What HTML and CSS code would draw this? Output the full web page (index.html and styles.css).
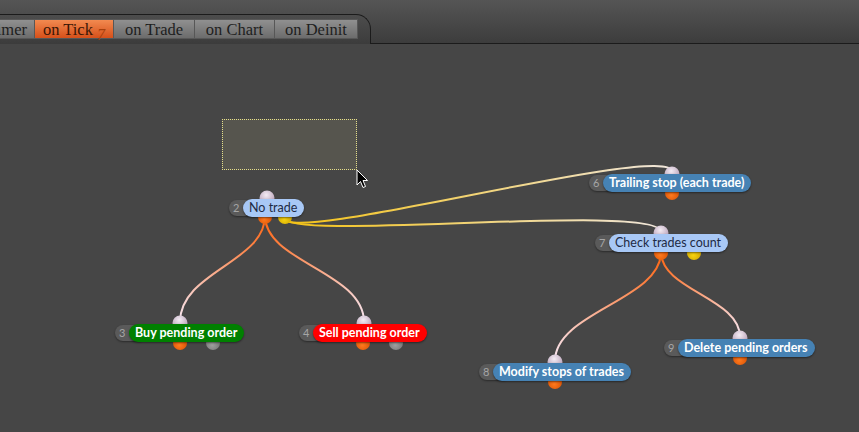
FILE: index.html
```html
<!DOCTYPE html>
<html lang="en">
<head>
    <meta charset="UTF-8">
    <title>Strategy editor</title>
    <link rel="stylesheet" href="styles.css">
</head>
<body>
    <div class="topbar">
        <div class="tabstrip">
            <div class="tab tab-timer">on Timer</div>
            <div class="tab tab-tick active">on Tick <sub>7</sub></div>
            <div class="tab tab-trade">on Trade</div>
            <div class="tab tab-chart">on Chart</div>
            <div class="tab tab-deinit">on Deinit</div>
        </div>
        <div class="topbar-rest"></div>
    </div>

    <div class="canvas">
        <!-- links and pins, in page coordinates -->
        <svg class="links" width="859" height="388" viewBox="0 44 859 388">
            <defs>
                <radialGradient id="pinTop" cx="45%" cy="30%" r="70%">
                    <stop offset="0" stop-color="#f4ecf4"/>
                    <stop offset="1" stop-color="#b49cb4"/>
                </radialGradient>
                <radialGradient id="pinOrange" cx="45%" cy="65%" r="70%">
                    <stop offset="0" stop-color="#ff7a1e"/>
                    <stop offset="1" stop-color="#d44c00"/>
                </radialGradient>
                <radialGradient id="pinYellow" cx="45%" cy="65%" r="70%">
                    <stop offset="0" stop-color="#f8d410"/>
                    <stop offset="1" stop-color="#c89e00"/>
                </radialGradient>
                <radialGradient id="pinGray" cx="45%" cy="65%" r="70%">
                    <stop offset="0" stop-color="#a0a0a0"/>
                    <stop offset="1" stop-color="#6e6e6e"/>
                </radialGradient>
                <linearGradient id="g23" gradientUnits="userSpaceOnUse" x1="265" y1="216" x2="180" y2="322">
                    <stop offset="0" stop-color="#ff6410"/>
                    <stop offset="1" stop-color="#f6e4ee"/>
                </linearGradient>
                <linearGradient id="g24" gradientUnits="userSpaceOnUse" x1="265" y1="216" x2="364" y2="322">
                    <stop offset="0" stop-color="#ff6410"/>
                    <stop offset="1" stop-color="#f6e4ee"/>
                </linearGradient>
                <linearGradient id="g26" gradientUnits="userSpaceOnUse" x1="285" y1="218" x2="672" y2="172">
                    <stop offset="0" stop-color="#f4c214"/>
                    <stop offset="1" stop-color="#f0e6dc"/>
                </linearGradient>
                <linearGradient id="g27" gradientUnits="userSpaceOnUse" x1="285" y1="218" x2="661" y2="232">
                    <stop offset="0" stop-color="#f4c214"/>
                    <stop offset="1" stop-color="#f0e6dc"/>
                </linearGradient>
                <linearGradient id="g78" gradientUnits="userSpaceOnUse" x1="661" y1="252" x2="555" y2="361">
                    <stop offset="0" stop-color="#ff6410"/>
                    <stop offset="1" stop-color="#f6e4ee"/>
                </linearGradient>
                <linearGradient id="g79" gradientUnits="userSpaceOnUse" x1="661" y1="252" x2="740" y2="337">
                    <stop offset="0" stop-color="#ff6410"/>
                    <stop offset="1" stop-color="#f6e4ee"/>
                </linearGradient>
            </defs>

            <path class="link" stroke="url(#g23)" d="M265,216 C265,262 180,272 180,322"/>
            <path class="link" stroke="url(#g24)" d="M265,216 C265,262 364,272 364,322"/>
            <path class="link" stroke="url(#g26)" d="M285,218 C285,246 672,140 672,172"/>
            <path class="link" stroke="url(#g27)" d="M285,218 C285,242 661,202 661,232"/>
            <path class="link" stroke="url(#g78)" d="M661,252 C661,300 555,312 555,361"/>
            <path class="link" stroke="url(#g79)" d="M661,252 C661,290 740,298 740,337"/>

            <!-- node 2 -->
            <circle cx="267" cy="198" r="7.5" fill="url(#pinTop)"/>
            <circle cx="265" cy="217" r="7" fill="url(#pinOrange)"/>
            <circle cx="285" cy="217" r="7" fill="url(#pinYellow)"/>
            <!-- node 6 -->
            <circle cx="672" cy="174" r="7.5" fill="url(#pinTop)"/>
            <circle cx="672" cy="193" r="7" fill="url(#pinOrange)"/>
            <!-- node 7 -->
            <circle cx="661" cy="233" r="7.5" fill="url(#pinTop)"/>
            <circle cx="661" cy="253" r="7" fill="url(#pinOrange)"/>
            <circle cx="694" cy="253" r="7" fill="url(#pinYellow)"/>
            <!-- node 3 -->
            <circle cx="180" cy="323" r="7.5" fill="url(#pinTop)"/>
            <circle cx="180" cy="343" r="7" fill="url(#pinOrange)"/>
            <circle cx="213" cy="343" r="7" fill="url(#pinGray)"/>
            <!-- node 4 -->
            <circle cx="364" cy="323" r="7.5" fill="url(#pinTop)"/>
            <circle cx="363" cy="343" r="7" fill="url(#pinOrange)"/>
            <circle cx="396" cy="343" r="7" fill="url(#pinGray)"/>
            <!-- node 8 -->
            <circle cx="555" cy="362" r="7.5" fill="url(#pinTop)"/>
            <circle cx="555" cy="382" r="7" fill="url(#pinOrange)"/>
            <!-- node 9 -->
            <circle cx="740" cy="338" r="7.5" fill="url(#pinTop)"/>
            <circle cx="740" cy="358" r="7" fill="url(#pinOrange)"/>
        </svg>

        <div class="selection"></div>

        <div class="node n2"><span class="num">2</span><span class="label light">No trade</span></div>
        <div class="node n6"><span class="num">6</span><span class="label blue">Trailing stop (each trade)</span></div>
        <div class="node n7"><span class="num">7</span><span class="label light">Check trades count</span></div>
        <div class="node n3"><span class="num">3</span><span class="label green">Buy pending order</span></div>
        <div class="node n4"><span class="num">4</span><span class="label red">Sell pending order</span></div>
        <div class="node n8"><span class="num">8</span><span class="label blue">Modify stops of trades</span></div>
        <div class="node n9"><span class="num">9</span><span class="label blue">Delete pending orders</span></div>

        <svg class="cursor" width="13" height="20" viewBox="0 0 13 20">
            <path d="M1,1 L1,16 L4.5,12.5 L7,18.5 L9.5,17.5 L7,11.5 L11.5,11.5 Z" fill="#000" stroke="#fff" stroke-width="1" stroke-linejoin="round"/>
        </svg>
    </div>
</body>
</html>
```

FILE: styles.css
```css
body {
    margin: 0;
    background-color: #464646;
    overflow: hidden;
}

/* top tab bar */
.topbar {
    display: flex;
    height: 44px;
    background: linear-gradient(to bottom, #555555, #3c3c3c);
}
.tabstrip {
    box-sizing: border-box;
    width: 371px;
    height: 30px;
    margin-top: 14px;
    padding: 4px 13px 0 0;
    border-top: 1px solid #1b1b1b;
    border-right: 1px solid #1b1b1b;
    border-top-right-radius: 15px;
    display: flex;
    overflow: hidden;
}
.topbar-rest {
    flex: 1;
    border-bottom: 1px solid #1b1b1b;
}
.tab {
    box-sizing: border-box;
    height: 20px;
    line-height: 20px;
    flex-shrink: 0;
    text-align: center;
    font-family: "Liberation Serif", serif;
    font-size: 16.5px;
    color: #1e1e1e;
    background: linear-gradient(to bottom, #909090, #6c6c6c);
    border: 1px solid #575757;
    margin-left: -1px;
}
.tab-timer { width: 81px; margin-left: -46px; text-align: right; padding-right: 7px; }
.tab-tick { width: 80px; }
.tab-trade { width: 82px; }
.tab-chart { width: 81px; }
.tab-deinit { width: 84px; }
.tab.active {
    background: linear-gradient(to bottom, #f28a50, #d6501a);
    color: #3a1606;
}
.tab sub {
    font-style: italic;
    font-size: 16px;
    color: #a8400c;
    vertical-align: -5px;
    line-height: 0;
}

/* diagram canvas */
.canvas {
    position: relative;
    height: 388px;
    overflow: hidden;
}
.links {
    position: absolute;
    left: 0;
    top: 0;
}
.link {
    fill: none;
    stroke-width: 2;
}
.selection {
    position: absolute;
    left: 222px;
    top: 75px;
    width: 133px;
    height: 49px;
    background: #56554e;
    border: 1px dotted #e6df8a;
}
.cursor {
    position: absolute;
    left: 356px;
    top: 125px;
}

.node {
    position: absolute;
    display: flex;
    align-items: center;
    font-family: Lato, "Open Sans", sans-serif;
    white-space: nowrap;
}
.n2 { left: 229px; top: 155px; }
.n6 { left: 589px; top: 130px; }
.n7 { left: 595px; top: 190px; }
.n3 { left: 115px; top: 280px; }
.n4 { left: 299px; top: 280px; }
.n8 { left: 479px; top: 319px; }
.n9 { left: 664px; top: 295px; }

.num {
    box-sizing: border-box;
    width: 26px;
    height: 16px;
    line-height: 16px;
    margin-right: -12px;
    padding-left: 4px;
    border-radius: 8px 0 0 8px;
    background: #5a5a5a;
    color: #a6a6a6;
    font-size: 11px;
    box-shadow: 0 1px 2px rgba(0, 0, 0, 0.4);
}
.label {
    position: relative;
    height: 18px;
    line-height: 18px;
    padding: 0 7px 0 6px;
    border-radius: 9px;
    font-size: 12.5px;
    box-shadow: 0 1px 2px rgba(0, 0, 0, 0.45);
}
.label.light {
    background: #a8c8f6;
    color: #1e2a44;
}
.label.blue {
    background: #4682b4;
    color: #ffffff;
    font-weight: bold;
}
.label.green {
    background: #008000;
    color: #ffffff;
    font-weight: bold;
}
.label.red {
    background: #ff0000;
    color: #ffffff;
    font-weight: bold;
}
```
